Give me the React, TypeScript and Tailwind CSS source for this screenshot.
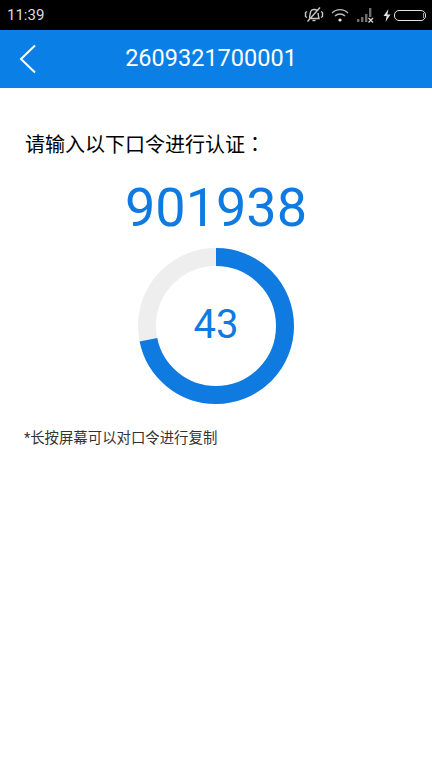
const R = 69;
const C = 2 * Math.PI * R;
const FONT = "font-['Roboto','Noto_Sans_CJK_SC',sans-serif]";

function StatusIcons() {
  return (
    <div className="flex items-center">
      <svg width="20" height="18" viewBox="0 0 20 18" className="mr-[7px]" fill="none" stroke="#c8c8c8" strokeWidth="1.4">
        <path d="M3 5.5 L1.5 6.5 V10.5 L3 11.5" />
        <path d="M17 5.5 L18.5 6.5 V10.5 L17 11.5" />
        <path d="M5.5 12.5 C6 9 6 7 7 5 C8 3 12 3 13 4.5" />
        <path d="M14 7 C14.3 9 14.5 11 15 12.5 H7" />
        <path d="M8.5 14.5 H11.5" />
        <path d="M3.5 15.5 L16 1.5" />
      </svg>
      <svg width="18" height="15" viewBox="0 0 18 15" className="mr-[8px]" fill="none" stroke="#bdbdbd" strokeWidth="1.4">
        <path d="M1 5 C5.5 0.5 12.5 0.5 17 5" />
        <path d="M4 8 C6.8 5.4 11.2 5.4 14 8" />
        <circle cx="9" cy="12" r="1.6" fill="#e8e8e8" stroke="none" />
      </svg>
      <svg width="18" height="16" viewBox="0 0 18 16" className="mr-[8px]" fill="#6e6e6e">
        <rect x="0" y="12" width="2.4" height="3" />
        <rect x="4" y="10" width="2.4" height="5" />
        <rect x="8" y="7" width="2.4" height="8" />
        <rect x="12" y="1" width="2.4" height="9" />
        <path d="M11.5 11 L16 15.5 M16 11 L11.5 15.5" stroke="#d8d8d8" strokeWidth="1.3" />
      </svg>
      <svg width="8" height="13" viewBox="0 0 8 13" className="mr-[3px]" fill="#e0e0e0">
        <path d="M5.5 0 L0.5 7 H3.6 L2.5 13 L7.5 5.6 H4.4 Z" />
      </svg>
      <div className="relative mr-[6px] h-[11px] w-[32px] rounded-[5px] border border-[#e4e4e4]">
        <div className="absolute right-[1px] top-[2px] h-[5px] w-[1px] bg-[#7dbb55]" />
      </div>
    </div>
  );
}

export default function App() {
  return (
    <div className={`flex h-[768px] w-[432px] flex-col overflow-hidden bg-white ${FONT}`}>
      <div className="flex h-[30px] items-center justify-between bg-black pl-[7px]">
        <span className="text-[15px] text-[#dcdcdc]">11:39</span>
        <StatusIcons />
      </div>

      <div className="flex h-[58px] items-center bg-[#0a7fe6]">
        <svg width="18" height="30" viewBox="0 0 18 30" className="ml-[19px]" fill="none" stroke="white" strokeWidth="2">
          <path d="M16 1.5 L2 15 L16 28.5" />
        </svg>
        <span className="ml-[84px] w-[180px] whitespace-nowrap text-center text-[23.5px] text-white">2609321700001</span>
      </div>

      <div className="mt-[42px] pl-[25px] text-[20px] leading-[28px] text-black">
        请输入以下口令进行认证<span className="font-['Noto_Sans_CJK_TC',sans-serif]">：</span>
      </div>

      <div className="mt-[17px] text-center text-[54px] leading-[64px] text-[#0f7be0]">901938</div>

      <div className="mt-[8px] flex justify-center">
        <div className="relative h-[156px] w-[156px]">
          <svg width="156" height="156" viewBox="0 0 156 156" className="-rotate-90">
            <circle cx="78" cy="78" r={R} fill="none" stroke="#eeeeee" strokeWidth="18" />
            <circle
              cx="78"
              cy="78"
              r={R}
              fill="none"
              stroke="#0f7be0"
              strokeWidth="18"
              strokeDasharray={`${C * (43 / 60)} ${C}`}
            />
          </svg>
          <div className="absolute inset-0 flex items-center justify-center pb-[2px] text-[40px] text-[#0f7be0]">43</div>
        </div>
      </div>

      <div className="mt-[24px] pl-[24px] text-[14.4px] leading-[22px] text-[#333333]">*长按屏幕可以对口令进行复制</div>
    </div>
  );
}
